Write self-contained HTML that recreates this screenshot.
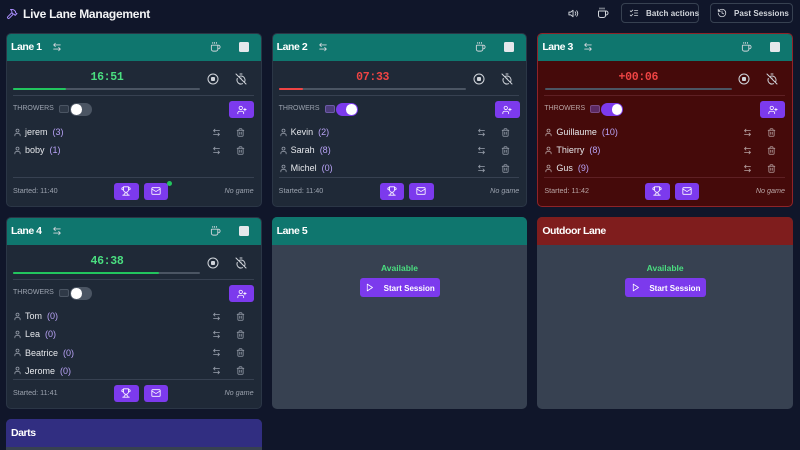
<!DOCTYPE html>
<html><head><meta charset="utf-8"><style>
*{box-sizing:border-box;margin:0;padding:0}
html,body{width:800px;height:450px;overflow:hidden;background:#10162a;font-family:"Liberation Sans",sans-serif;color:#e5e7eb}
body{position:relative}
.a,.card>*,.card svg,body>svg.i{position:absolute}
svg.i{fill:none;stroke:currentColor;stroke-width:2;stroke-linecap:round;stroke-linejoin:round;display:block}
.card{position:absolute;width:255.67px;border-radius:5px;background:#1f2937;border:1px solid #2b3646;overflow:hidden}
.card>*{margin:-1px 0 0 -1px}
.red{background:#450a0a;border-color:#8f2328}
.empty{background:#374151;border:0}
.empty>*{margin:0}
.hd{left:0;top:0;width:256px;height:28px;background:#0f766e}
.ttl{left:5px;top:7px;font:bold 10.5px/14px "Liberation Sans",sans-serif;color:#fff;letter-spacing:-.45px;white-space:nowrap}
.sq{left:232.5px;top:9px;width:10px;height:10px;background:#e5e7eb;border-radius:1.5px}
.tm{left:51px;width:100px;top:38px;text-align:center;font:bold 11.5px/14px "Liberation Mono",monospace;letter-spacing:-.3px}
.g{color:#4ade80}.r{color:#ef4444}
.bar{left:7.3px;top:55px;width:187px;height:2.4px;background:#4b5563;border-radius:2px}
.fill{left:7.3px;top:55px;height:2.4px;border-radius:2px}
.dv{left:7px;width:240.5px;height:1px;background:#374151}
.red .dv{background:#5e2024}
.th{left:7px;top:70px;font:7px/12px "Liberation Sans",sans-serif;color:#9ca3af;white-space:nowrap}
.red .th{color:#b9a5a5}
.tb{left:53px;top:72px;width:10px;height:8px;border-radius:2px;background:#2f3947;border:1px solid #4b5563}
.tog{left:64px;top:70px;width:22px;height:12.5px;border-radius:7px;background:#4b5563}
.tog.on{background:#7c3aed}
.knob{left:65px;top:71px;width:10.5px;height:10.5px;border-radius:50%;background:#fff}
.tog.on+.knob{left:74.5px}
.add,.fb{background:#7c3aed;border-radius:3px;color:#fff}
.add{left:223px;top:68px;width:25px;height:17px}
.nm{left:19px;font:9px/12px "Liberation Sans",sans-serif;color:#e5e7eb;white-space:nowrap}
.nm b{font-weight:normal;color:#b9a3f7;margin-left:5px}
.sm{font:7.2px/10px "Liberation Sans",sans-serif;color:#9ca3af;white-space:nowrap}
.red .sm{color:#b9a5a5}
.ng{right:7px;font-style:italic}
.fb{width:24.5px;height:17px}
.dot{left:161px;top:147.5px;width:5px;height:5px;border-radius:50%;background:#22c55e}
.tbtn{position:absolute;top:3px;height:20px;border:1px solid #374151;border-radius:4px}
.tl{position:absolute;top:8px;font:bold 8px/11px "Liberation Sans",sans-serif;color:#d1d5db;white-space:nowrap;letter-spacing:.05px}
.av{left:0;width:100%;top:46px;text-align:center;font:bold 8.5px/11px "Liberation Sans",sans-serif;color:#4ade80}
.ss{left:88px;top:61px;width:80.5px;height:19px;background:#7c3aed;border-radius:3px}
.sst{left:112px;top:65.5px;font:bold 8px/11px "Liberation Sans",sans-serif;color:#fff;white-space:nowrap}
.card svg.u{left:7px;color:#9ca3af}
.card svg.s{left:205.5px;color:#9ca3af}
.card svg.d{left:229.5px;color:#9ca3af}
.red svg.u,.red svg.s,.red svg.d{color:#b9a5a5}
</style></head><body>
<svg width="0" height="0" style="position:absolute">
<symbol id="sw" viewBox="0 0 24 24"><path d="M8 3 4 7l4 4M4 7h16M16 21l4-4-4-4M20 17H4"/></symbol>
<symbol id="cf" viewBox="0 0 24 24"><path d="M10 2v2M14 2v2M6 2v2M16 8a1 1 0 0 1 1 1v8a4 4 0 0 1-4 4H7a4 4 0 0 1-4-4V9a1 1 0 0 1 1-1h14a4 4 0 1 1 0 8h-1"/></symbol>
<symbol id="st" viewBox="0 0 24 24"><circle cx="12" cy="12" r="10"/><rect x="9" y="9" width="6" height="6" rx="1" fill="currentColor"/></symbol>
<symbol id="to" viewBox="0 0 24 24"><path d="M10 2h4M4.6 11a8 8 0 0 0 1.7 8.7 8 8 0 0 0 8.7 1.7M7.4 7.4a8 8 0 0 1 10.3 1 8 8 0 0 1 .9 10.2M2 2l20 20M12 12v-2"/></symbol>
<symbol id="up" viewBox="0 0 24 24"><path d="M16 21v-2a4 4 0 0 0-4-4H6a4 4 0 0 0-4 4v2M19 8v6M22 11h-6"/><circle cx="9" cy="7" r="4"/></symbol>
<symbol id="us" viewBox="0 0 24 24"><path d="M19 21v-2a4 4 0 0 0-4-4H9a4 4 0 0 0-4 4v2"/><circle cx="12" cy="7" r="4"/></symbol>
<symbol id="tr" viewBox="0 0 24 24"><path d="M3 6h18M19 6v14c0 1-1 2-2 2H7c-1 0-2-1-2-2V6M8 6V4c0-1 1-2 2-2h4c1 0 2 1 2 2v2M10 11v6M14 11v6"/></symbol>
<symbol id="tp" viewBox="0 0 24 24"><path d="M6 9H4.500a2.500 2.500 0 0 1 0-5H6M18 9h1.500a2.500 2.500 0 0 0 0-5H18M4 22h16M10 14.660V17c0 .55-.47.98-.97 1.210C7.850 18.750 7 20.240 7 22M14 14.660V17c0 .55.47.98.97 1.210C16.150 18.750 17 20.240 17 22M18 2H6v7a6 6 0 0 0 12 0V2Z"/></symbol>
<symbol id="ml" viewBox="0 0 24 24"><rect x="2" y="4" width="20" height="16" rx="2"/><path d="m22 7-8.970 5.700a1.940 1.940 0 0 1-2.060 0L2 7"/></symbol>
<symbol id="pl" viewBox="0 0 24 24"><path d="M6 3 20 12 6 21Z"/></symbol>
</svg>

<svg class="i" style="left:6px;top:8px;color:#a78bfa" width="12" height="12" viewBox="0 0 24 24"><path d="m15 12-8.373 8.373a1 1 0 1 1-3-3L12 9M18 15l4-4M21.500 11.500l-1.914-1.914A2 2 0 0 1 19 8.172V7l-2.260-2.260a6 6 0 0 0-4.202-1.756L9 2.960l.92.82A6.180 6.180 0 0 1 12 8.400V10l2 2h1.172a2 2 0 0 1 1.414.586L18.500 14.500"/></svg>
<div class="a" style="left:23px;top:6px;font:bold 12px/16px 'Liberation Sans',sans-serif;color:#f3f4f6;white-space:nowrap;letter-spacing:-.25px">Live Lane Management</div>
<svg class="i" style="left:567.500px;top:7.500px;color:#d1d5db" width="11" height="11" viewBox="0 0 24 24"><path d="M11 5 6 9H2v6h4l5 4zM15.540 8.460a5 5 0 0 1 0 7.070M19 6a9 9 0 0 1 0 12"/></svg>
<svg class="i" style="left:597px;top:7px;color:#d1d5db" width="12" height="12"><use href="#cf"/></svg>
<div class="tbtn" style="left:621px;width:78px"></div>
<svg class="i" style="left:629px;top:8px;color:#d1d5db" width="10" height="10" viewBox="0 0 24 24"><path d="m3 17 2 2 4-4M3 7l2 2 4-4M13 6h8M13 12h8M13 18h8"/></svg>
<div class="tl" style="left:646px">Batch actions</div>
<div class="tbtn" style="left:710px;width:83px"></div>
<svg class="i" style="left:717px;top:8px;color:#d1d5db" width="10" height="10" viewBox="0 0 24 24"><path d="M3 12a9 9 0 1 0 9-9 9.750 9.750 0 0 0-6.740 2.740L3 8M3 3v5h5M12 7v5l4 2"/></svg>
<div class="tl" style="left:734px">Past Sessions</div>

<!-- Lane 1 -->
<div class="card" style="left:6px;top:33px;height:174px">
<div class="hd"></div><div class="ttl">Lane 1</div>
<svg class="i" style="left:46px;top:9px;color:#d1d5db" width="10" height="10"><use href="#sw"/></svg>
<svg class="i" style="left:203.500px;top:8px;color:#d1d5db" width="11" height="12"><use href="#cf"/></svg>
<div class="sq"></div>
<div class="tm g">16:51</div>
<div class="bar"></div><div class="fill" style="width:52.500px;background:#22c55e"></div>
<svg class="i" style="left:201px;top:40px;color:#d1d5db" width="12" height="12"><use href="#st"/></svg>
<svg class="i" style="left:229px;top:40px;color:#d1d5db" width="12" height="12"><use href="#to"/></svg>
<div class="dv" style="top:62px"></div>
<div class="th">THROWERS</div>
<div class="tb"></div>
<div class="tog"></div><div class="knob"></div>
<div class="add"></div><svg class="i" style="left:230.500px;top:71.500px;color:#fff" width="10" height="10"><use href="#up"/></svg>
<svg class="i u" style="top:94.500px" width="9" height="9"><use href="#us"/></svg><div class="nm" style="top:93px">jerem<b>(3)</b></div>
<svg class="i s" style="top:94.500px" width="9" height="9"><use href="#sw"/></svg><svg class="i d" style="top:94.500px" width="9" height="9"><use href="#tr"/></svg>
<svg class="i u" style="top:112.500px" width="9" height="9"><use href="#us"/></svg><div class="nm" style="top:111px">boby<b>(1)</b></div>
<svg class="i s" style="top:112.500px" width="9" height="9"><use href="#sw"/></svg><svg class="i d" style="top:112.500px" width="9" height="9"><use href="#tr"/></svg>
<div class="dv" style="top:144px"></div>
<div class="sm" style="left:7px;top:153px">Started: 11:40</div>
<div class="fb" style="left:108px;top:149.500px"></div><svg class="i" style="left:115px;top:153px;color:#fff" width="10" height="10"><use href="#tp"/></svg>
<div class="fb" style="left:137.500px;top:149.500px"></div><svg class="i" style="left:144.500px;top:153px;color:#fff" width="10" height="10"><use href="#ml"/></svg>
<div class="dot"></div>
<div class="sm ng" style="top:153px">No game</div>
</div>

<!-- Lane 2 -->
<div class="card" style="left:271.670px;top:33px;height:174px">
<div class="hd"></div><div class="ttl">Lane 2</div>
<svg class="i" style="left:46px;top:9px;color:#d1d5db" width="10" height="10"><use href="#sw"/></svg>
<svg class="i" style="left:203.500px;top:8px;color:#d1d5db" width="11" height="12"><use href="#cf"/></svg>
<div class="sq"></div>
<div class="tm r">07:33</div>
<div class="bar"></div><div class="fill" style="width:24px;background:#ef4444"></div>
<svg class="i" style="left:201px;top:40px;color:#d1d5db" width="12" height="12"><use href="#st"/></svg>
<svg class="i" style="left:229px;top:40px;color:#d1d5db" width="12" height="12"><use href="#to"/></svg>
<div class="dv" style="top:62px"></div>
<div class="th">THROWERS</div>
<div class="tb" style="background:#4c3d7a;border-color:#6d5aa8"></div>
<div class="tog on"></div><div class="knob"></div>
<div class="add"></div><svg class="i" style="left:230.500px;top:71.500px;color:#fff" width="10" height="10"><use href="#up"/></svg>
<svg class="i u" style="top:94.500px" width="9" height="9"><use href="#us"/></svg><div class="nm" style="top:93px">Kevin<b>(2)</b></div>
<svg class="i s" style="top:94.500px" width="9" height="9"><use href="#sw"/></svg><svg class="i d" style="top:94.500px" width="9" height="9"><use href="#tr"/></svg>
<svg class="i u" style="top:112.500px" width="9" height="9"><use href="#us"/></svg><div class="nm" style="top:111px">Sarah<b>(8)</b></div>
<svg class="i s" style="top:112.500px" width="9" height="9"><use href="#sw"/></svg><svg class="i d" style="top:112.500px" width="9" height="9"><use href="#tr"/></svg>
<svg class="i u" style="top:130.500px" width="9" height="9"><use href="#us"/></svg><div class="nm" style="top:129px">Michel<b>(0)</b></div>
<svg class="i s" style="top:130.500px" width="9" height="9"><use href="#sw"/></svg><svg class="i d" style="top:130.500px" width="9" height="9"><use href="#tr"/></svg>
<div class="dv" style="top:144px"></div>
<div class="sm" style="left:7px;top:153px">Started: 11:40</div>
<div class="fb" style="left:108px;top:149.500px"></div><svg class="i" style="left:115px;top:153px;color:#fff" width="10" height="10"><use href="#tp"/></svg>
<div class="fb" style="left:137.500px;top:149.500px"></div><svg class="i" style="left:144.500px;top:153px;color:#fff" width="10" height="10"><use href="#ml"/></svg>
<div class="sm ng" style="top:153px">No game</div>
</div>

<!-- Lane 3 -->
<div class="card red" style="left:537.330px;top:33px;height:174px">
<div class="hd"></div><div class="ttl">Lane 3</div>
<svg class="i" style="left:46px;top:9px;color:#d1d5db" width="10" height="10"><use href="#sw"/></svg>
<svg class="i" style="left:203.500px;top:8px;color:#d1d5db" width="11" height="12"><use href="#cf"/></svg>
<div class="sq"></div>
<div class="tm r">+00:06</div>
<div class="bar"></div>
<svg class="i" style="left:201px;top:40px;color:#d1d5db" width="12" height="12"><use href="#st"/></svg>
<svg class="i" style="left:229px;top:40px;color:#d1d5db" width="12" height="12"><use href="#to"/></svg>
<div class="dv" style="top:62px"></div>
<div class="th">THROWERS</div>
<div class="tb" style="background:#5c2a63;border-color:#7a4a85"></div>
<div class="tog on"></div><div class="knob"></div>
<div class="add"></div><svg class="i" style="left:230.500px;top:71.500px;color:#fff" width="10" height="10"><use href="#up"/></svg>
<svg class="i u" style="top:94.500px" width="9" height="9"><use href="#us"/></svg><div class="nm" style="top:93px">Guillaume<b>(10)</b></div>
<svg class="i s" style="top:94.500px" width="9" height="9"><use href="#sw"/></svg><svg class="i d" style="top:94.500px" width="9" height="9"><use href="#tr"/></svg>
<svg class="i u" style="top:112.500px" width="9" height="9"><use href="#us"/></svg><div class="nm" style="top:111px">Thierry<b>(8)</b></div>
<svg class="i s" style="top:112.500px" width="9" height="9"><use href="#sw"/></svg><svg class="i d" style="top:112.500px" width="9" height="9"><use href="#tr"/></svg>
<svg class="i u" style="top:130.500px" width="9" height="9"><use href="#us"/></svg><div class="nm" style="top:129px">Gus<b>(9)</b></div>
<svg class="i s" style="top:130.500px" width="9" height="9"><use href="#sw"/></svg><svg class="i d" style="top:130.500px" width="9" height="9"><use href="#tr"/></svg>
<div class="dv" style="top:144px"></div>
<div class="sm" style="left:7px;top:153px">Started: 11:42</div>
<div class="fb" style="left:108px;top:149.500px"></div><svg class="i" style="left:115px;top:153px;color:#fff" width="10" height="10"><use href="#tp"/></svg>
<div class="fb" style="left:137.500px;top:149.500px"></div><svg class="i" style="left:144.500px;top:153px;color:#fff" width="10" height="10"><use href="#ml"/></svg>
<div class="sm ng" style="top:153px">No game</div>
</div>

<!-- Lane 4 -->
<div class="card" style="left:6px;top:217px;height:192px">
<div class="hd"></div><div class="ttl">Lane 4</div>
<svg class="i" style="left:46px;top:9px;color:#d1d5db" width="10" height="10"><use href="#sw"/></svg>
<svg class="i" style="left:203.500px;top:8px;color:#d1d5db" width="11" height="12"><use href="#cf"/></svg>
<div class="sq"></div>
<div class="tm g">46:38</div>
<div class="bar"></div><div class="fill" style="width:146px;background:#22c55e"></div>
<svg class="i" style="left:201px;top:40px;color:#d1d5db" width="12" height="12"><use href="#st"/></svg>
<svg class="i" style="left:229px;top:40px;color:#d1d5db" width="12" height="12"><use href="#to"/></svg>
<div class="dv" style="top:62px"></div>
<div class="th">THROWERS</div>
<div class="tb"></div>
<div class="tog"></div><div class="knob"></div>
<div class="add"></div><svg class="i" style="left:230.500px;top:71.500px;color:#fff" width="10" height="10"><use href="#up"/></svg>
<svg class="i u" style="top:94.500px" width="9" height="9"><use href="#us"/></svg><div class="nm" style="top:93px">Tom<b>(0)</b></div>
<svg class="i s" style="top:94.500px" width="9" height="9"><use href="#sw"/></svg><svg class="i d" style="top:94.500px" width="9" height="9"><use href="#tr"/></svg>
<svg class="i u" style="top:112.500px" width="9" height="9"><use href="#us"/></svg><div class="nm" style="top:111px">Lea<b>(0)</b></div>
<svg class="i s" style="top:112.500px" width="9" height="9"><use href="#sw"/></svg><svg class="i d" style="top:112.500px" width="9" height="9"><use href="#tr"/></svg>
<svg class="i u" style="top:130.800px" width="9" height="9"><use href="#us"/></svg><div class="nm" style="top:129.500px">Beatrice<b>(0)</b></div>
<svg class="i s" style="top:130.800px" width="9" height="9"><use href="#sw"/></svg><svg class="i d" style="top:130.800px" width="9" height="9"><use href="#tr"/></svg>
<svg class="i u" style="top:149px" width="9" height="9"><use href="#us"/></svg><div class="nm" style="top:147.500px">Jerome<b>(0)</b></div>
<svg class="i s" style="top:149px" width="9" height="9"><use href="#sw"/></svg><svg class="i d" style="top:149px" width="9" height="9"><use href="#tr"/></svg>
<div class="dv" style="top:162px"></div>
<div class="sm" style="left:7px;top:171px">Started: 11:41</div>
<div class="fb" style="left:108px;top:167.500px"></div><svg class="i" style="left:115px;top:171px;color:#fff" width="10" height="10"><use href="#tp"/></svg>
<div class="fb" style="left:137.500px;top:167.500px"></div><svg class="i" style="left:144.500px;top:171px;color:#fff" width="10" height="10"><use href="#ml"/></svg>
<div class="sm ng" style="top:171px">No game</div>
</div>

<!-- Lane 5 -->
<div class="card empty" style="left:271.670px;top:217px;height:192px">
<div class="hd"></div><div class="ttl">Lane 5</div>
<div class="av">Available</div>
<div class="ss"></div>
<svg class="i" style="left:93.500px;top:66px;color:#fff" width="9" height="9"><use href="#pl"/></svg>
<div class="sst">Start Session</div>
</div>

<!-- Outdoor -->
<div class="card empty" style="left:537.330px;top:217px;height:192px">
<div class="hd" style="background:#7f1d1d"></div><div class="ttl">Outdoor Lane</div>
<div class="av">Available</div>
<div class="ss"></div>
<svg class="i" style="left:93.500px;top:66px;color:#fff" width="9" height="9"><use href="#pl"/></svg>
<div class="sst">Start Session</div>
</div>

<!-- Darts -->
<div class="card empty" style="left:6px;top:419px;height:31px;border-radius:5px 5px 0 0">
<div class="hd" style="background:#312e81"></div><div class="ttl">Darts</div>
</div>
</body></html>
